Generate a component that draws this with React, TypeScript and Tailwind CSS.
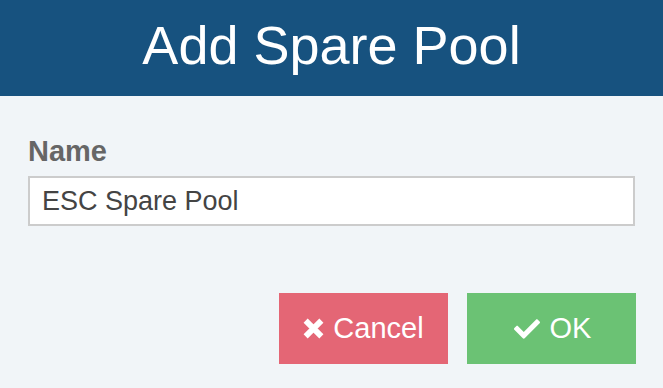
import { FaCheck } from "react-icons/fa";

function TimesIcon() {
  return (
    <svg viewBox="0 0 20 20" className="w-[21px] h-[21px]" fill="none" stroke="currentColor" strokeWidth="5.5" strokeLinecap="butt">
      <path d="M2.5 2.5 L17.5 17.5 M17.5 2.5 L2.5 17.5" />
    </svg>
  );
}

export default function App() {
  return (
    <div className="w-[663px] h-[388px] bg-[#f1f5f8] font-['Liberation_Sans',Arial,sans-serif] overflow-hidden">
      {/* Header */}
      <div className="h-[96px] bg-[#17527f] flex items-center justify-center">
        <h1 className="text-white text-[54px] leading-none pb-[6px]">Add Spare Pool</h1>
      </div>

      {/* Form */}
      <div className="px-[28px] pt-[41px]">
        <label className="block text-[#666] font-bold text-[29px] leading-none">Name</label>
        <input
          defaultValue="ESC Spare Pool"
          className="mt-[10px] w-full h-[50px] bg-white border-2 border-[#cccccc] px-[12px] text-[27px] text-[#444] outline-none"
        />
      </div>

      {/* Actions */}
      <div className="flex justify-end gap-[19px] pr-[27px] mt-[67px]">
        <button className="w-[169px] h-[71px] bg-[#e46675] text-white text-[29px] flex items-center justify-center gap-[9px]">
          <TimesIcon />
          Cancel
        </button>
        <button className="w-[169px] h-[71px] bg-[#6bc274] text-white text-[29px] flex items-center justify-center gap-[8px]">
          <FaCheck className="w-[30px] h-[26px]" />
          OK
        </button>
      </div>
    </div>
  );
}
